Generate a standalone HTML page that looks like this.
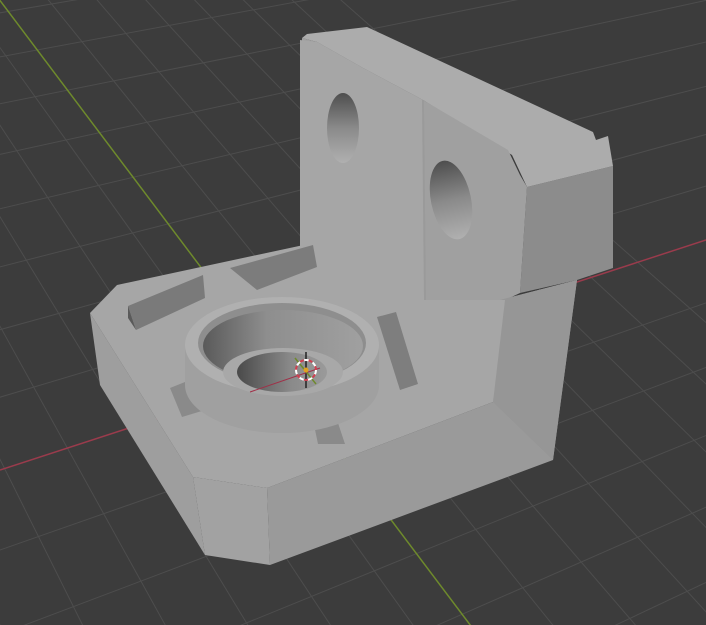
<!DOCTYPE html>
<html><head><meta charset="utf-8"><style>
html,body{margin:0;padding:0;background:#3c3c3c;width:706px;height:625px;overflow:hidden}
svg{display:block;overflow:hidden}
</style></head><body>
<svg width="706" height="625" viewBox="0 0 706 625" xmlns="http://www.w3.org/2000/svg">
<defs>
<clipPath id="c"><rect width="706" height="625"/></clipPath>
<linearGradient id="hole" x1="0" y1="0" x2="0" y2="1">
<stop offset="0" stop-color="#4e4e4e"/><stop offset="0.5" stop-color="#8a8a8a"/><stop offset="1" stop-color="#b0b0b0"/>
</linearGradient>
<linearGradient id="bore" x1="0" y1="0" x2="1" y2="0">
<stop offset="0" stop-color="#5a5a5a"/><stop offset="0.4" stop-color="#8e8e8e"/><stop offset="1" stop-color="#a0a0a0"/>
</linearGradient>
<linearGradient id="small" x1="0" y1="0" x2="1" y2="0">
<stop offset="0" stop-color="#4a4a4a"/><stop offset="0.6" stop-color="#8a8a8a"/><stop offset="1" stop-color="#9a9a9a"/>
</linearGradient>
</defs>
<g clip-path="url(#c)">
<rect width="706" height="625" fill="#3c3c3c"/>
<g stroke="#4d4d4d" stroke-width="1" fill="none">
<line x1="3000" y1="-500" x2="-200" y2="1120"/>
<line x1="3000" y1="-500" x2="-200" y2="1010"/>
<line x1="3000" y1="-500" x2="-200" y2="905"/>
<line x1="3000" y1="-500" x2="-200" y2="805"/>
<line x1="3000" y1="-500" x2="-200" y2="710"/>
<line x1="3000" y1="-500" x2="-200" y2="620"/>
<line x1="3000" y1="-500" x2="-200" y2="457"/>
<line x1="3000" y1="-500" x2="-200" y2="385"/>
<line x1="3000" y1="-500" x2="-200" y2="318"/>
<line x1="3000" y1="-500" x2="-200" y2="256"/>
<line x1="3000" y1="-500" x2="-200" y2="198"/>
<line x1="3000" y1="-500" x2="-200" y2="144"/>
<line x1="3000" y1="-500" x2="-200" y2="94"/>
<line x1="3000" y1="-500" x2="-200" y2="47"/>
<line x1="3000" y1="-500" x2="-200" y2="3"/>
<line x1="3000" y1="-500" x2="-200" y2="-38"/>
<line x1="3000" y1="-500" x2="-200" y2="-76"/>
<line x1="3000" y1="-500" x2="-200" y2="-112"/>
<line x1="3000" y1="-500" x2="-200" y2="-146"/>
<line x1="-678" y1="-900" x2="-521" y2="1500"/>
<line x1="-678" y1="-900" x2="-391" y2="1500"/>
<line x1="-678" y1="-900" x2="-261" y2="1500"/>
<line x1="-678" y1="-900" x2="-131" y2="1500"/>
<line x1="-678" y1="-900" x2="-1" y2="1500"/>
<line x1="-678" y1="-900" x2="129" y2="1500"/>
<line x1="-678" y1="-900" x2="259" y2="1500"/>
<line x1="-678" y1="-900" x2="389" y2="1500"/>
<line x1="-678" y1="-900" x2="519" y2="1500"/>
<line x1="-678" y1="-900" x2="649" y2="1500"/>
<line x1="-678" y1="-900" x2="779" y2="1500"/>
<line x1="-678" y1="-900" x2="909" y2="1500"/>
<line x1="-678" y1="-900" x2="1039" y2="1500"/>
<line x1="-678" y1="-900" x2="1259" y2="1500"/>
<line x1="-678" y1="-900" x2="1389" y2="1500"/>
<line x1="-678" y1="-900" x2="1519" y2="1500"/>
<line x1="-678" y1="-900" x2="1649" y2="1500"/>
<line x1="-678" y1="-900" x2="1779" y2="1500"/>
<line x1="-678" y1="-900" x2="1909" y2="1500"/>
<line x1="-678" y1="-900" x2="2039" y2="1500"/>
</g>
<line x1="0" y1="470" x2="706" y2="240" stroke="#9a3b4c" stroke-width="1.5"/>
<line x1="-678" y1="-900" x2="1129" y2="1500" stroke="#6e8a2c" stroke-width="1.5"/>

<polygon points="527,187 613,166 613,268 577,280 520,293" fill="#8c8c8c"/>
<polygon points="302,38 307,34 367,27 593,132 596,140 608,136 613,166 527,187 512,155 423,100 363,68 317,42" fill="#acacac"/>
<polygon points="302,38 317,42 363,68 423,100 508,150 520,175 527,187 520,293 505,300 300,300" fill="#a0a0a0"/>
<polygon points="300,40 317,42 363,68 423,100 425,300 300,300" fill="#a6a6a6"/>
<line x1="423" y1="100" x2="425" y2="300" stroke="#9a9a9a" stroke-width="2"/>
<ellipse cx="343" cy="128" rx="16" ry="35" fill="url(#hole)"/>
<ellipse cx="451" cy="200" rx="20" ry="40" fill="url(#hole)" transform="rotate(-12 451 200)"/>

<polygon points="90,313 193,477 205,555 100,385" fill="#9e9e9e"/>
<polygon points="193,477 267,488 270,565 205,555" fill="#a2a2a2"/>
<polygon points="267,488 493,402 500,300 577,280 553,460 270,565" fill="#9a9a9a"/>
<polygon points="500,300 577,280 553,460 493,402" fill="#969696"/>
<polygon points="90,313 117,285 313,243 318,290 425,300 505,300 493,402 267,488 193,477" fill="#a6a6a6"/>
<polygon points="128,306 203,275 205,298 136,330" fill="#7a7a7a"/>
<polygon points="128,306 136,330 128,318" fill="#5a5a5a"/>
<polygon points="230,268 313,245 317,267 257,290" fill="#7c7c7c"/>
<polygon points="377,317 396,312 418,384 400,390" fill="#7e7e7e"/>
<polygon points="170,388 190,380 205,410 182,417" fill="#8a8a8a"/>
<polygon points="313,420 335,414 345,444 318,444" fill="#8a8a8a"/>
<ellipse cx="282" cy="385" rx="97" ry="48" fill="#a0a0a0"/>
<rect x="185" y="345" width="194" height="40" fill="#a0a0a0"/>
<ellipse cx="282" cy="345" rx="97" ry="48" fill="#b0b0b0"/>
<ellipse cx="282" cy="343" rx="84" ry="40" fill="#8e8e8e"/>
<ellipse cx="283" cy="346" rx="80" ry="36" fill="url(#bore)"/>
<ellipse cx="283" cy="372" rx="60" ry="24" fill="#a8a8a8"/>
<ellipse cx="282" cy="372" rx="45" ry="20" fill="url(#small)"/>
<line x1="306" y1="352" x2="306" y2="388" stroke="#222" stroke-width="1.5"/>
<line x1="250" y1="392" x2="320" y2="368" stroke="#a03048" stroke-width="1"/>
<line x1="295" y1="358" x2="316" y2="384" stroke="#6e8a2c" stroke-width="1.5"/>
<circle cx="306" cy="370" r="10" fill="none" stroke="#fff" stroke-width="2" stroke-dasharray="5 4"/>
<circle cx="306" cy="370" r="10" fill="none" stroke="#d04050" stroke-width="2" stroke-dasharray="4 5" stroke-dashoffset="4.5"/>
<circle cx="306" cy="370" r="2.5" fill="#e0a020"/>
</g>
</svg>
</body></html>
